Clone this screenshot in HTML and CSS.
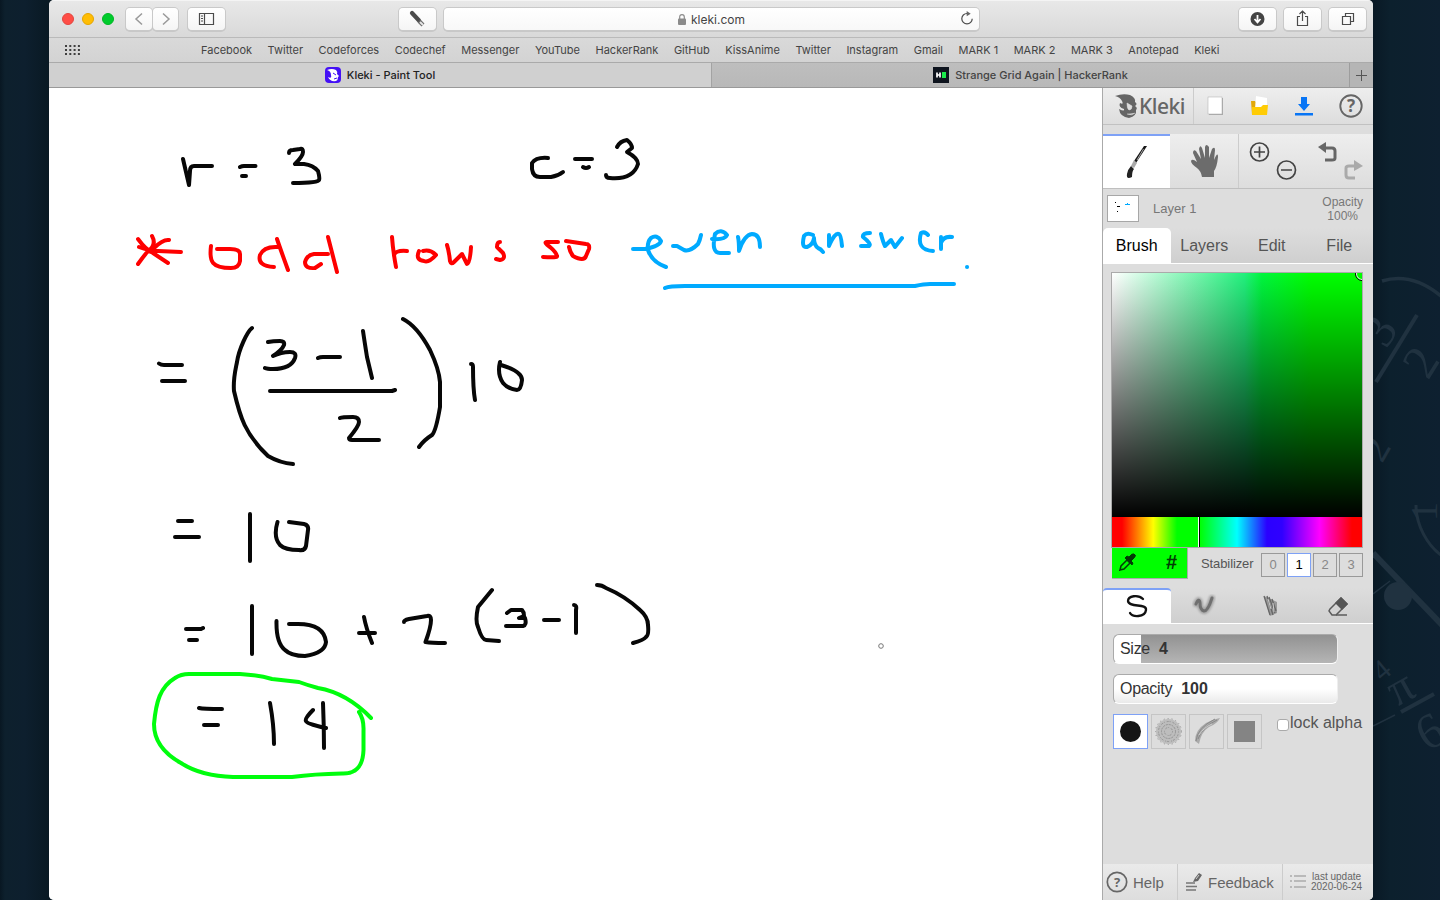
FILE: index.html
```html
<!DOCTYPE html>
<html lang="en">
<head>
<meta charset="utf-8">
<title>Kleki - Paint Tool</title>
<link rel="stylesheet" href="styles.css">
</head>
<body>
<svg class="wallpaper" viewBox="1373 0 67 900" width="67" height="900">
  <g fill="none" stroke="#203240">
    <path d="M1382 281C1402 275 1422 280 1442 297" stroke-width="3.5"/>
    <path d="M1417 315L1376 382" stroke-width="4"/>
    <path d="M1416 505C1416 525 1427 545 1442 556" stroke-width="3"/>
    <path d="M1373 553L1442 625" stroke-width="6"/>
    <path d="M1373 594L1390 581M1373 726L1395 715" stroke-width="1.5"/>
    <path d="M1401 712L1434 694" stroke-width="4"/>
  </g>
  <circle cx="1398" cy="572" r="14" transform="translate(0 24)" fill="#203240"/>
  <g class="chalk">
    <text transform="translate(1386 339) rotate(-58)" font-size="49" x="-9" y="6">3</text>
    <text transform="translate(1428 381) rotate(-58)" font-size="49">2</text>
    <text transform="translate(1382 464) rotate(-60)" font-size="40">2</text>
    <text transform="translate(1382 682) rotate(-40)" font-size="29">4</text>
    <text transform="translate(1397 707) rotate(-29)" font-size="48">π</text>
    <text transform="translate(1427 752) rotate(-29)" font-size="50">6</text>
    <text transform="translate(1437 521) rotate(-90)" font-size="38">1</text>
  </g>
</svg>
<div class="window">
  <header class="toolbar">
    <div class="lights"><i class="red"></i><i class="yellow"></i><i class="green"></i></div>
    <div class="nav">
      <span class="btn"><svg width="26" height="22"><path d="M16 5.5L10 11L16 16.5" class="thin dim"/></svg></span>
      <span class="btn"><svg width="25" height="22"><path d="M10 5.5L16 11L10 16.5" class="thin dim"/></svg></span>
    </div>
    <span class="btn wide side"><svg width="37" height="22"><path d="M11.5 5.5H25.5V16.5H11.5ZM16.5 5.5V16.5M13 8H15M13 10.500H15M13 13H15" class="line"/></svg></span>
    <span class="btn wide pencil"><svg width="37" height="22"><path d="M13 5L20 12.500" stroke="#4b4b4b" stroke-width="4.200" stroke-linecap="round"/><path d="M20 13L24 17" stroke="#666" stroke-width="4"/><path d="M21 14L24 17" stroke="#e5e5e5" stroke-width="2"/></svg></span>
    <div class="address">
      <svg width="8" height="11"><rect y="4.500" width="8" height="6.500" rx="1" fill="#8b8b8b"/><path d="M1.700 5V3Q1.700 .7 4 .7Q6.300 .7 6.300 3V5" fill="none" stroke="#8b8b8b" stroke-width="1.200"/></svg>
      <span>kleki.com</span>
      <svg class="reload" width="14" height="15"><path d="M7 2.500A5.200 5.200 0 1 0 12.200 7.700" class="line"/><path d="M6.700 0L10.700 2.700L6.700 5.200Z" fill="#666"/></svg>
    </div>
    <div class="actions">
      <span class="btn wide"><svg width="37" height="22"><circle cx="18.500" cy="11" r="7" fill="#444"/><path d="M18.500 7V14M15.500 11L18.500 14.300L21.500 11" fill="none" stroke="#fff" stroke-width="1.800"/></svg></span>
      <span class="btn wide"><svg width="37" height="22"><path d="M16 8.500H13.500V17.500H23.500V8.500H21M18.500 13V3.500M15.500 6L18.500 3L21.500 6" class="line"/></svg></span>
      <span class="btn wide"><svg width="37" height="22"><path d="M13.500 8.500H21.500V16.500H13.500ZM16.500 8.500V5.500H24.500V13.500H21.500" class="line"/></svg></span>
    </div>
  </header>
  <nav class="bookmarks">
    <svg class="dots" width="15" height="11"><path d="M0 1H15M0 5H15M0 9H15" stroke="#3f3f3f" stroke-width="2" stroke-dasharray="2 2.300"/></svg>
    <span>Facebook</span><span>Twitter</span><span>Codeforces</span><span>Codechef</span><span>Messenger</span><span>YouTube</span><span>HackerRank</span><span>GitHub</span><span>KissAnime</span><span>Twitter</span><span>Instagram</span><span>Gmail</span><span>MARK 1</span><span>MARK 2</span><span>MARK 3</span><span>Anotepad</span><span>Kleki</span>
  </nav>
  <div class="tabs">
    <div class="tab current"><svg width="16" height="16"><rect width="16" height="16" rx="4" fill="#4410f5"/><path d="M2 3Q7 1 11 3Q13 5 12 7L14 9L13 10Q13 13 11 14Q5 15 3 10Q7 12 6 8Q6 4 2 3Z" fill="#fff"/><path d="M8 6L11 8M9 12L12 11" stroke="#4410f5"/></svg><span>Kleki - Paint Tool</span></div>
    <div class="tab other"><svg width="16" height="16"><rect width="16" height="16" fill="#0e141e"/><path d="M4 5.500V10.500M4 8H7M7 5.500V10.500" stroke="#fff" stroke-width="1.700"/><path d="M9 5H13V11H9Z" fill="#1be94b"/></svg><span>Strange Grid Again | HackerRank</span></div>
    <div class="newtab"><svg width="11" height="11"><path d="M5.500 0V11M0 5.500H11" stroke="#555"/></svg></div>
  </div>
  <main class="app">
    <svg class="canvas" viewBox="49 88 1053 812" width="1053" height="812">
      <g class="ink">
        <path d="M183 159L186 172L189 185L190 171Q190 166 194 166H212M240 167Q242 166 244 166H255.500M242 176H246M289 153Q289 150 293 150L300 149Q303 148 303 152Q303 156 295 164H304Q313 165 318 171Q320 178 319 180Q318 183 293 183"/>
        <path d="M548 158Q536 157 532 163V169Q533 177 540 177H551Q558 176 563 172M575 159H592M583 167Q586 169 589 167M617 147Q620 141 627 140Q632 144 632 148L627 152Q638 158 638 164Q633 180 610 178Q606 178 606 175"/>
        <path d="M159 363.500Q161 365 164 365H182M162 381H185M252 328C247 332 239 349 237 362C235 372 233 379 234 391C240 417 245 434 268 456Q280 463 293 464M268 342Q273 341 280 341Q285 341 284 345Q282 350 273 356Q281 352 290 352Q297 352 295 358Q291 369 273 369Q267 369 265 368M318 358Q320 357 323 357H340M363 331Q364 338 367 357L372 378M270 391H392L395 390M340 418Q342 417 353 417Q359 417 359 422Q359 426 349 438Q349 440 352 440H379M403 319Q417 326 430 350Q439 369 440 382V407Q436 431 432 435Q424 440 419 447M471 364Q473 364 473 367Q473 389 475 400M500 362Q497 374 503 383Q508 389 517 390Q521 390 522 380Q522 371 501 365"/>
        <path d="M178 521H192M175 537H199M250 514V561M277.500 522Q273 537 280 545Q285 550 299 550Q305 551 306 546L308 530Q309 525 304 524L289 522"/>
        <path d="M186 629H201L203 628M189 640H197M252 606V654M276.500 621Q276 643 285 650Q291 656 305 656Q325 653 326 642Q324 624 298 624H289M364 617Q366 628 372 643M359 633H375M404 622Q404 620 409 619L427 616Q431 615 431 620Q431 627 425.500 642Q431 643 445 643M492 590L478 607Q475 621 478 627Q482 640 486 640L499 641M507 613L511 610H522Q524 612 524 616L519 618H525Q527 625 523 626H506M544 620H559M574 605Q577 605 576 610V633M597 585Q602 585 606 588Q625 596 640 610Q648 617 648 625Q649 635 646 637Q644 640 633 643"/>
        <path d="M199 708Q203 709 222 709M204 725H218M270 703Q274 725 274 744M313 710Q304 719 306 721Q306 724 326 728M323 703Q324 727 324 748"/>
      </g>
      <g class="ink red">
        <path d="M139 247Q149 251 158 251L181 252M138 239Q146 250 153 253L168 263M152 236Q157 245 148 251Q143 257 138 264M169 240Q163 239 154 248M211 246C209 262 212 268 231 268Q239 268 240 261V254Q240 249 230 249H217M278 247Q264 246 260 255Q257 266 274 267M277 239Q280 248 288 270M328 254H314Q307 255 305 262Q305 269 315 268L321 264M328 237L337 272M392 237Q393 251 396 267M394 256Q394 250 407 251M419 251Q415 260 424 261Q429 263 436 255Q430 249 423 251M447 245Q449 251 450 261Q451 265 454 262L462 254L467 264Q470 264 471 247M500 242Q497 242 497 247L503 253Q506 259 500 260L496 259"/>
        <path d="M558 242H547Q543 242 550 247Q556 252 557 256Q558 258 543 257M566 241L586 244Q590 244 589 249L586 256Q584 262 573 256Q570 252 569 247"/>
      </g>
      <g class="ink blue">
        <path d="M633 249H645Q660 246 661 241Q657 234 651 238Q647 242 648 250Q652 262 666 267M673 246H677L684 250Q690 252 698 244Q700 240 701 235M712 239Q725 240 727 235Q721 228 715 234Q711 253 720 253H729M738 237Q739 241 739 251Q744 235 752 234Q760 234 760 247M813 235Q807 232 804 236Q801 248 807 247Q813 245 814 238Q814 245 818 248Q821 249 823 252M829 235V246Q835 232 839 234Q841 235 842 246M870 233Q862 233 863 237Q872 244 869 246H861M881 234Q883 242 885 246L891 240L895 247L902 238M928 235Q925 231 921 233Q916 250 933 251M941 237V249M941 243Q943 236 952 237M665 288Q669 286 685 286H915Q924 284 930 284H954"/>
        <path d="M967 267H967.100"/>
      </g>
      <path class="ink lime" d="M359 712Q364 719 363.500 731V750C363 764 358 774 342 773.500Q314 774 292 777H233Q201 776 181 763C163 753 154 740 154 724C156 702 160 687 175 678Q181 674 189 674H240Q258 675 272 679L299 682Q307 685 318 688Q347 693 371 718"/>
      <circle cx="881" cy="646" r="2.300" fill="#fff" stroke="#777"/>
    </svg>
    <aside class="panel">
      <div class="brand-row">
        <div class="brand"><svg width="24" height="26" viewBox="0 0 24 26"><path d="M0 3Q8 0 15 2Q21 5 20 9Q23 11 20 13Q23 15 21 17Q22 23 14 25Q5 24 4 16Q10 19 9 16Q3 14 5 10Q9 12 7 8Q5 4 0 3Z" fill="#656565"/><path d="M12 10L17 13Q17 17 14 17Q12 16 12 10M12 21Q17 23 20 20" fill="#ddd" stroke="#ddd" stroke-width=".6"/></svg><span>Kleki</span></div>
        <div class="files">
          <svg width="22" height="24"><rect x="5" y="4" width="14" height="17" fill="#aaa"/><rect x="4" y="3" width="14" height="17" fill="#fff" stroke="#aaa" stroke-width=".5"/></svg>
          <svg width="22" height="24"><path d="M2 7H6L8 10H18V21H3Z" fill="#e1a80b"/><path d="M7 2L18 4V15H6Z" fill="#fff"/><path d="M3 13H12L14 11H19L18 21H3Z" fill="#ffcc05"/></svg>
          <svg width="22" height="24"><path d="M8 3H14V10H17L11 17L5 10H8Z" fill="#0875f5"/><rect x="2" y="19" width="18" height="2.500" fill="#0875f5"/></svg>
          <svg width="26" height="26"><circle cx="13" cy="13" r="10.700" fill="none" stroke="#666" stroke-width="1.900"/><text x="13" y="19" class="q">?</text></svg>
        </div>
      </div>
      <div class="tool-row">
        <div class="tool on"><svg width="24" height="36"><path d="M22 2L11 19L9 17L19 2Z" fill="#171717"/><path d="M18.500 5L12 16" stroke="#ccc" stroke-width=".8"/><path d="M12 19L9 16L6 22L9 24Z" fill="#aaa"/><path d="M6 22L9 25Q7 27 7 33Q1 36 2 30Q3 25 6 22Z" fill="#222"/></svg></div>
        <div class="tool"><svg width="28" height="34"><path d="M12 33Q11 27 7 24Q1 20 1 17Q2 14 7 18L3 9Q3 5 6 7L11 15L9 5Q10 0 12 4L15 14L15 3Q16-1 19 3V14L22 5Q25 2 25 6L24 16Q28 7 28 13Q27 23 24 27L24 33Z" fill="#6c6c6c"/></svg></div>
        <div class="view"><svg width="135" height="53"><g fill="none" stroke="#434343" stroke-width="1.700"><circle cx="20.500" cy="18" r="9"/><path d="M15 18H26M20.500 12.500V23.500"/><circle cx="47.500" cy="36" r="9"/><path d="M42 36H53"/></g><path d="M86 14H93Q96 14 96 17V24Q96 26 93 26H86" fill="none" stroke="#666" stroke-width="3"/><path d="M79 13L87 8V19Z" fill="#666"/><path d="M116 44H110Q107 44 107 41V34Q107 32 110 32H116" fill="none" stroke="#aaa" stroke-width="3"/><path d="M115 26L124 32L115 37Z" fill="#aaa"/></svg></div>
      </div>
      <div class="layer-row"><svg width="32" height="27"><rect x=".5" y=".5" width="31" height="26" fill="#fff" stroke="#a7a7a7"/><path d="M8 7.500H9M10 11.500H13M10 16.500H11" stroke="#000"/><path d="M18 9.500H23M20 8.500H21" stroke="#00aaff"/></svg><span>Layer 1</span><small>Opacity<br>100%</small></div>
      <div class="main-tabs"><span class="on">Brush</span><span>Layers</span><span>Edit</span><span>File</span></div>
      <div class="color">
        <div class="field"><svg width="250" height="244"><circle cx="250" cy="1" r="5.500" fill="none" stroke="#fff"/><circle cx="250" cy="1" r="6.500" fill="none" stroke="#000"/></svg></div>
        <div class="hue"><i></i></div>
        <div class="color-row">
          <div class="swatch"><svg width="20" height="20" viewBox="0 0 20 20"><path d="M3 17L4 13L10 7L13 10L7 16Z" fill="none" stroke="#033b06" stroke-width="1.500"/><path d="M2 18L4 16M8 5L15 12L16 10L14 8L17 5Q20 2 17 1Q15 0 12 4L10 3Z" fill="#033b06" stroke="#033b06"/></svg><b>#</b></div>
          <span>Stabilizer</span><div class="steps"><i>0</i><i class="on">1</i><i>2</i><i>3</i></div>
        </div>
      </div>
      <div class="brush-tabs">
        <div class="on"><svg width="24" height="26"><path d="M18 5C13 0 3 2 3 7C4 14 22 9 21 16C20 24 7 23 5 19" fill="none" stroke="#111" stroke-width="2.300" stroke-linecap="round"/></svg></div>
        <div><svg width="24" height="24"><path d="M4 10Q7 3 8 9Q8 16 12 17Q16 17 20 4" class="soft s1"/><path d="M4 10Q7 3 8 9Q8 16 12 17Q16 17 20 4" class="soft s2"/></svg></div>
        <div><svg width="24" height="24"><path d="M4 2L17 8V19L10 22L7 12Z" fill="#999"/><path d="M4 2L10 21M7 2L13 21M9 3L15 19M12 5L16 17" stroke="#666" stroke-width="1.300"/><path d="M8 5L11 15M13 9L14 18" stroke="#ccc"/></svg></div>
        <div><svg width="24" height="24"><path d="M3 15L14 4L20 10L9 21H5L2 17Z" fill="none" stroke="#5b5b5b" stroke-width="1.500"/><path d="M14 3L21 10L15 16L8 9Z" fill="#555"/><path d="M9 21H20" stroke="#5b5b5b" stroke-width="1.500"/></svg></div>
      </div>
      <div class="settings">
        <div class="slider size"><span>Size</span><b>4</b></div>
        <div class="slider"><span>Opacity</span><b>100</b></div>
        <div class="alpha-row">
          <div class="tip on"><svg width="33" height="33"><circle cx="16.500" cy="16.500" r="10.500" fill="#151515"/></svg></div>
          <div class="tip"><svg width="33" height="33"><circle cx="16.500" cy="16.500" r="12.500" fill="#bdbdbd"/><g fill="none" stroke="#929292" stroke-dasharray="1 2 2 1"><circle cx="16.500" cy="16.500" r="13" stroke-dasharray="1 3"/><circle cx="16.500" cy="16.500" r="10"/><circle cx="16.500" cy="16.500" r="7" stroke-dasharray="2 1"/><circle cx="16.500" cy="16.500" r="4"/></g></svg></div>
          <div class="tip"><svg width="33" height="33"><path d="M5 26Q5 15 16 8Q23 4 30 3Q27 9 19 12Q11 17 9 29Z" fill="#aaa"/><path d="M8 24Q12 12 27 5M6 26Q7 13 25 4" fill="none" stroke="#888"/><path d="M9 20Q14 12 22 9" fill="none" stroke="#ccc"/></svg></div>
          <div class="tip"><svg width="33" height="33"><rect x="6" y="6" width="21" height="21" fill="#848484"/></svg></div>
          <label class="lock"><i></i><span>lock alpha</span></label>
        </div>
      </div>
      <footer>
        <div class="help"><svg width="22" height="22"><circle cx="11" cy="11" r="9.700" fill="none" stroke="#666" stroke-width="1.700"/><text x="11" y="16" class="q small">?</text></svg><span>Help</span></div>
        <div class="feedback"><svg width="18" height="20"><path d="M1 11H10M1 14.500H12M1 18H11" stroke="#777" stroke-width="1.700"/><path d="M8 10L10 6L14 1L17 3L13 9Z" fill="#666"/><path d="M11 7L14 3" stroke="#ccc"/></svg><span>Feedback</span></div>
        <div class="update"><svg width="16" height="18"><path d="M0 3H2M4 3H16M0 8H2M4 8H16M0 14H2M4 14H16" stroke="#aaa" stroke-width="1.500"/></svg><small>last update<br>2020-06-24</small></div>
      </footer>
    </aside>
  </main>
</div>
</body>
</html>
```
FILE: styles.css
```css
* { box-sizing: border-box; }
body {
  margin: 0;
  height: 900px;
  overflow: hidden;
  background: linear-gradient(90deg, #081722 0, #0d202d 5px, #0d1f2e 25px, #091923 49px, #091925 1373px, #0c202d 1390px, #0e2030);
  font-family: "Liberation Sans", Arial, sans-serif;
}
svg { display: block; flex: none; }
.wallpaper { position: absolute; right: 0; top: 0; }
.chalk { fill: #203240; font-family: "Liberation Serif", serif; }
.window {
  position: relative;
  width: 1324px;
  height: 900px;
  margin-left: 49px;
  overflow: hidden;
  border-radius: 5px;
  background: #ddd;
  display: flex;
  flex-direction: column;
}
.toolbar, .bookmarks, .tabs { font-family: Inter, "Noto Sans", sans-serif; color: #444; }
.toolbar {
  height: 38px;
  flex: none;
  display: flex;
  align-items: center;
  padding: 0 7px 0 13px;
  background: linear-gradient(#e8e8e8, #d9d9d9);
  border-top: 1px solid #f4f4f4;
  border-bottom: 1px solid #bababa;
}
.lights { display: flex; gap: 8px; }
.lights i { width: 12px; height: 12px; border-radius: 50%; border: 1px solid #e2463f; background: #ff4d46; }
.lights .yellow { background: #ffbd04; border-color: #e5a500; }
.lights .green { background: #00cb2c; border-color: #00b624; }
.nav { display: flex; gap: 1px; margin-left: 12px; }
.btn { background: linear-gradient(#fff, #f5f5f5); border-radius: 4px; box-shadow: 0 0 0 1px #c9c9c9, 0 1px 0 1px #b5b5b580; height: 22px; }
.side { margin-left: 10px; }
.pencil { margin-left: 174px; }
.wide { width: 37px; }
.thin { fill: none; stroke: #777; stroke-width: 1.5; }
.dim { stroke: #999; }
.line { fill: none; stroke: #4b4b4b; stroke-width: 1.2; }
.address {
  flex: none;
  position: relative;
  display: flex;
  align-items: center;
  justify-content: center;
  gap: 5px;
  width: 535px;
  height: 22px;
  margin-left: 8px;
  background: linear-gradient(#fff, #f8f8f8);
  border-radius: 4px;
  box-shadow: 0 0 0 1px #c9c9c9, 0 1px 0 1px #b5b5b580;
  font-size: 12px;
}
.reload { position: absolute; right: 5px; top: 3px; }
.actions { margin-left: auto; display: flex; gap: 8px; }
.bookmarks {
  height: 25px;
  flex: none;
  display: flex;
  align-items: center;
  background: linear-gradient(#d9d9d9, #d3d3d3);
  border-bottom: 1px solid #aaa;
  font-size: 11px;
  white-space: nowrap;
  padding-left: 16px;
}
.bookmarks span { margin-right: 15.5px; }
.dots { margin-right: 121px; }
.tabs { height: 25px; flex: none; display: flex; border-bottom: 1px solid #999; font-size: 11px; }
.tab { display: flex; align-items: center; justify-content: center; gap: 6px; font-weight: 500; }
.current { width: 662px; background: #d0d0d0; color: #222; }
.other { width: 638px; background: linear-gradient(#bebebe, #b8b8b8); border-left: 1px solid #a3a3a3; }
.newtab { width: 24px; background: #b5b5b5; border-left: 1px solid #9d9d9d; display: flex; align-items: center; justify-content: center; }
.app { display: flex; flex: 1; }
.canvas { background: #fff; }
.ink { fill: none; stroke: #070707; stroke-width: 4; stroke-linecap: round; stroke-linejoin: round; }
.red { stroke: #fe0000; }
.blue { stroke: #00aaff; }
.lime { stroke: #00fd0d; }
.panel { width: 271px; border-left: 1px solid #aaa; background: #ddd; color: #555; display: flex; flex-direction: column; }
.brand-row { display: flex; height: 37px; border-bottom: 1px solid #c1c1c1; background: linear-gradient(#eee, #ddd); }
.brand { width: 91px; border-right: 1px solid #ccc; display: flex; align-items: center; padding-left: 12px; color: #666; font: 500 21px "Noto Sans", sans-serif; letter-spacing: -.5px; }
.files { flex: 1; display: flex; align-items: center; justify-content: space-between; padding: 0 9px 0 10px; }
.q { font: bold 17px "Noto Sans", sans-serif; fill: #666; text-anchor: middle; }
.q.small { font-size: 13px; }
.tool-row { display: flex; height: 55px; margin-top: 9px; border-bottom: 1px solid #bfbfbf; background: linear-gradient(#eee, #ddd); }
.tool { width: 68px; display: flex; align-items: center; justify-content: center; }
.tool.on { width: 67px; background: #fff; border-top: 2px solid #7ea1f6; }
.view { border-left: 1px solid #ccc; width: 135px; }
.layer-row { height: 39px; display: flex; align-items: center; padding: 0 10px 0 4px; font-size: 13px; color: #777; }
.layer-row span { margin-left: 14px; }
.layer-row small { margin-left: auto; text-align: center; font-size: 12px; line-height: 14px; }
.main-tabs { height: 36px; display: flex; background: linear-gradient(#ddd, #cfcfcf); border-bottom: 1px solid #fff; font-size: 16px; line-height: 35px; text-align: center; }
.main-tabs span { width: 67.5px; }
.main-tabs .on { background: #fff; color: #000; border-radius: 5px 5px 0 0; }
.color { padding: 8px 10px 0 8px; }
.field { border: 1px solid #aaa; width: 252px; height: 246px; background: linear-gradient(transparent, #000), linear-gradient(90deg, #fff, #22f07c 53%, #00f63d 60%, #0f0 80%); }
.field svg { overflow: hidden; }
.hue { width: 252px; height: 31px; border: solid #aaa; border-width: 0 1px 1px; margin-top: -1px; background: linear-gradient(90deg, red 4%, #ff0 16.5%, #0f0 26%, #0f0 35%, cyan 50%, #2a00ff 62%, #3000ff 68%, magenta 83%, red 96%); }
.hue i { display: block; width: 2px; height: 30px; margin-left: 86px; background: #000; border-left: 1px solid #fff; }
.color-row { display: flex; align-items: center; height: 30px; font-size: 13px; padding-left: 1px; }
.swatch { width: 76px; height: 31px; border: 1px solid #aaa; border-top: 0; border-left: 0; background: #0f0; display: flex; align-items: center; padding: 0 10px 0 5px; justify-content: space-between; color: #033b06; font-size: 20px; }
.color-row > span { margin-left: 13px; letter-spacing: -.1px; }
.steps { display: flex; gap: 2px; margin-left: auto; padding-top: 3px; }
.steps i { width: 24px; height: 24px; border: 1px solid #999; font: 13px/22px "Liberation Sans", sans-serif; text-align: center; color: #888; }
.steps .on { background: #fff; border-color: #7ea1f6; color: #000; }
.brush-tabs { height: 36px; margin-top: 10px; display: flex; border-bottom: 1px solid #fff; background: linear-gradient(#ddd, #cfcfcf); }
.brush-tabs div { width: 67.5px; display: flex; align-items: center; justify-content: center; }
.brush-tabs .on { background: #fff; border-top: 2px solid #7ea1f6; border-radius: 4px 4px 0 0; }
.soft { fill: none; stroke: #888; stroke-width: 6; stroke-linecap: round; opacity: .65; }
.s1 { filter: blur(1px); }
.s2 { stroke-width: 3; stroke: #555; filter: blur(.7px); }
.settings { padding: 10px 10px 0; }
.slider { width: 225px; height: 30px; border: 1px solid #bbb; border-color: #aaa #eee #fff #aaa; border-radius: 6px; display: flex; align-items: center; gap: 9px; padding-left: 6px; margin-bottom: 10px; color: #333; font-size: 16px; background: linear-gradient(#fff 50%, #eaeaea); }
.slider span { letter-spacing: -.3px; }
.size { background: linear-gradient(90deg, #fff 27px, transparent 27px), linear-gradient(#929292, #b5b5b5); }
.alpha-row { display: flex; gap: 3px; }
.tip { width: 35px; height: 35px; border: 1px solid #c5c5c5; }
.tip.on { border-color: #7ea1f6; background: #fff; }
.lock { display: flex; align-items: center; height: 18px; margin-left: 12px; font-size: 16px; white-space: nowrap; }
.lock i { width: 12px; height: 12px; flex: none; border: 1px solid #aaa; background: #fff; border-radius: 3px; margin: 3px 1px 0 0; }
footer { height: 36px; margin-top: auto; background: linear-gradient(#eaeaea, #ddd); display: flex; color: #666; font-size: 15px; }
footer div { display: flex; align-items: center; gap: 5px; }
.help { width: 75px; border-right: 1px solid #ccc; padding-left: 3px; }
.feedback { width: 105px; border-right: 1px solid #ccc; padding-left: 7px; }
.update { flex: 1; padding-left: 7px; }
.update small { font-size: 10px; line-height: 10px; text-align: center; white-space: nowrap; }
```
